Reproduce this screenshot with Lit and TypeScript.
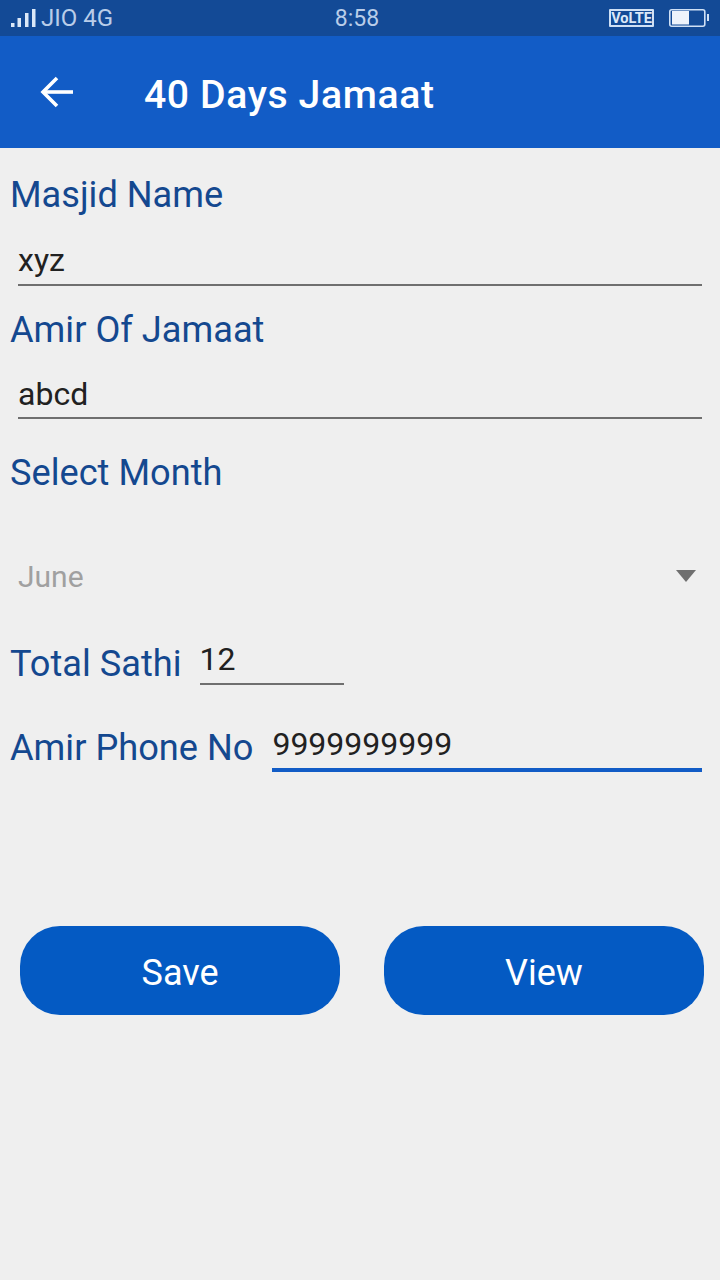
import { LitElement, html, css } from "lit";
import { customElement } from "lit/decorators.js";

@customElement("app-root")
export class AppRoot extends LitElement {
  static styles = css`
    :host {
      display: block;
      width: 720px;
      height: 1280px;
      background: #efefef;
      font-family: Roboto, "Liberation Sans", sans-serif;
      overflow: hidden;
    }
    .status {
      height: 36px;
      background: #134a96;
      color: #b9cde9;
      display: flex;
      align-items: center;
      position: relative;
      font-size: 24px;
      padding-left: 10px;
      box-sizing: border-box;
    }
    .signal { margin-right: 4px; }
    .time {
      position: absolute;
      left: 0;
      right: 0;
      text-align: center;
      pointer-events: none;
      font-size: 23px;
      transform: translateX(-3px);
    }
    .right {
      margin-left: auto;
      display: flex;
      align-items: center;
      gap: 15px;
      padding-right: 11px;
    }
    .volte {
      border: 2px solid #cfe0f5;
      color: #dbe8f8;
      font-size: 14.5px;
      font-weight: 700;
      line-height: 15px;
      height: 14px;
      width: 41px;
      text-align: center;
      border-radius: 1px;
      white-space: nowrap;
    }
    .appbar {
      height: 112px;
      background: #125cc6;
      display: flex;
      align-items: center;
      color: #fff;
      box-sizing: border-box;
      padding-left: 40px;
      padding-bottom: 1px;
    }
    .appbar svg { display: block; }
    .title {
      margin-left: 71px;
      padding-top: 7px;
      font-size: 39.2px;
      font-weight: 500;
      letter-spacing: 0.6px;
    }
    .form {
      display: flex;
      flex-direction: column;
    }
    .label {
      color: #14488f;
      font-size: 36.2px;
      line-height: 40px;
      margin-left: 10px;
      white-space: nowrap;
    }
    .l1 { margin-top: 27px; }
    .input {
      color: #212121;
      font-size: 32px;
      line-height: 38px;
      border-bottom: 2px solid #6f6f6f;
      margin: 0 18px;
      box-sizing: border-box;
    }
    .i1 { margin-top: 26px; height: 45px; }
    .l2 { margin-top: 24px; }
    .i2 { margin-top: 24px; height: 45px; padding-top: 1px; }
    .l3 { margin-top: 34px; }
    .spinner {
      margin-top: 61px;
      height: 44px;
      display: flex;
      align-items: center;
      justify-content: space-between;
      padding: 0 24px 0 18px;
      color: #a0a0a0;
      font-size: 30px;
    }
    .row {
      display: flex;
      align-items: flex-end;
    }
    .row .label { margin-right: 18px; }
    .row .input { margin: 0; }
    .r1 { margin-top: 36px; height: 51px; }
    .r1 .label { transform: translateY(-1px); }
    .r1 .input { width: 144px; height: 51px; padding-top: 6px; }
    .r2 { margin-top: 35px; height: 52px; }
    .r2 .label { transform: translateY(-4px); margin-right: 19px; }
    .r2 .input {
      width: 430px;
      height: 52px;
      border-bottom: 4px solid #125cc6;
      padding-top: 5px;
    }
    .buttons {
      display: flex;
      gap: 44px;
      padding-left: 20px;
      margin-top: 154px;
    }
    .btn {
      width: 320px;
      height: 89px;
      box-sizing: border-box;
      padding-top: 5px;
      border-radius: 40px;
      background: #045ac3;
      color: #fff;
      font-size: 36px;
      display: flex;
      align-items: center;
      justify-content: center;
    }
  `;

  render() {
    return html`
      <div class="status">
        <svg class="signal" width="27" height="20" viewBox="0 0 27 20" fill="#dbe8f8">
          <rect x="1" y="15" width="3.5" height="4"></rect>
          <rect x="7.5" y="10" width="3.5" height="9"></rect>
          <rect x="15" y="5" width="3.5" height="14"></rect>
          <rect x="22" y="1" width="3.5" height="18"></rect>
        </svg>
        <span>JIO 4G</span>
        <span class="time">8:58</span>
        <div class="right">
          <span class="volte">VoLTE</span>
          <svg width="40" height="20" viewBox="0 0 40 20">
            <rect x="0.8" y="1.8" width="35" height="16.4" rx="2" fill="none" stroke="#cfe0f5" stroke-width="1.6"></rect>
            <rect x="3" y="3" width="17" height="13.5" fill="#eef3fb"></rect>
            <rect x="38" y="6" width="2" height="7" fill="#cfe0f5"></rect>
          </svg>
        </div>
      </div>
      <div class="appbar">
        <svg width="33" height="32" viewBox="0 0 33 32" fill="none" stroke="#fff" stroke-width="3.6">
          <path d="M33 16H3"></path>
          <path d="M17 2L3 16l14 14"></path>
        </svg>
        <span class="title">40 Days Jamaat</span>
      </div>
      <div class="form">
        <div class="label l1">Masjid Name</div>
        <div class="input i1">xyz</div>
        <div class="label l2">Amir Of Jamaat</div>
        <div class="input i2">abcd</div>
        <div class="label l3">Select Month</div>
        <div class="spinner">
          <span>June</span>
          <svg width="20" height="12" viewBox="0 0 20 12" fill="#6f6f6f"><path d="M0 0h20L10 12z"></path></svg>
        </div>
        <div class="row r1">
          <span class="label">Total Sathi</span>
          <div class="input">12</div>
        </div>
        <div class="row r2">
          <span class="label">Amir Phone No</span>
          <div class="input">9999999999</div>
        </div>
        <div class="buttons">
          <div class="btn">Save</div>
          <div class="btn">View</div>
        </div>
      </div>
    `;
  }
}
